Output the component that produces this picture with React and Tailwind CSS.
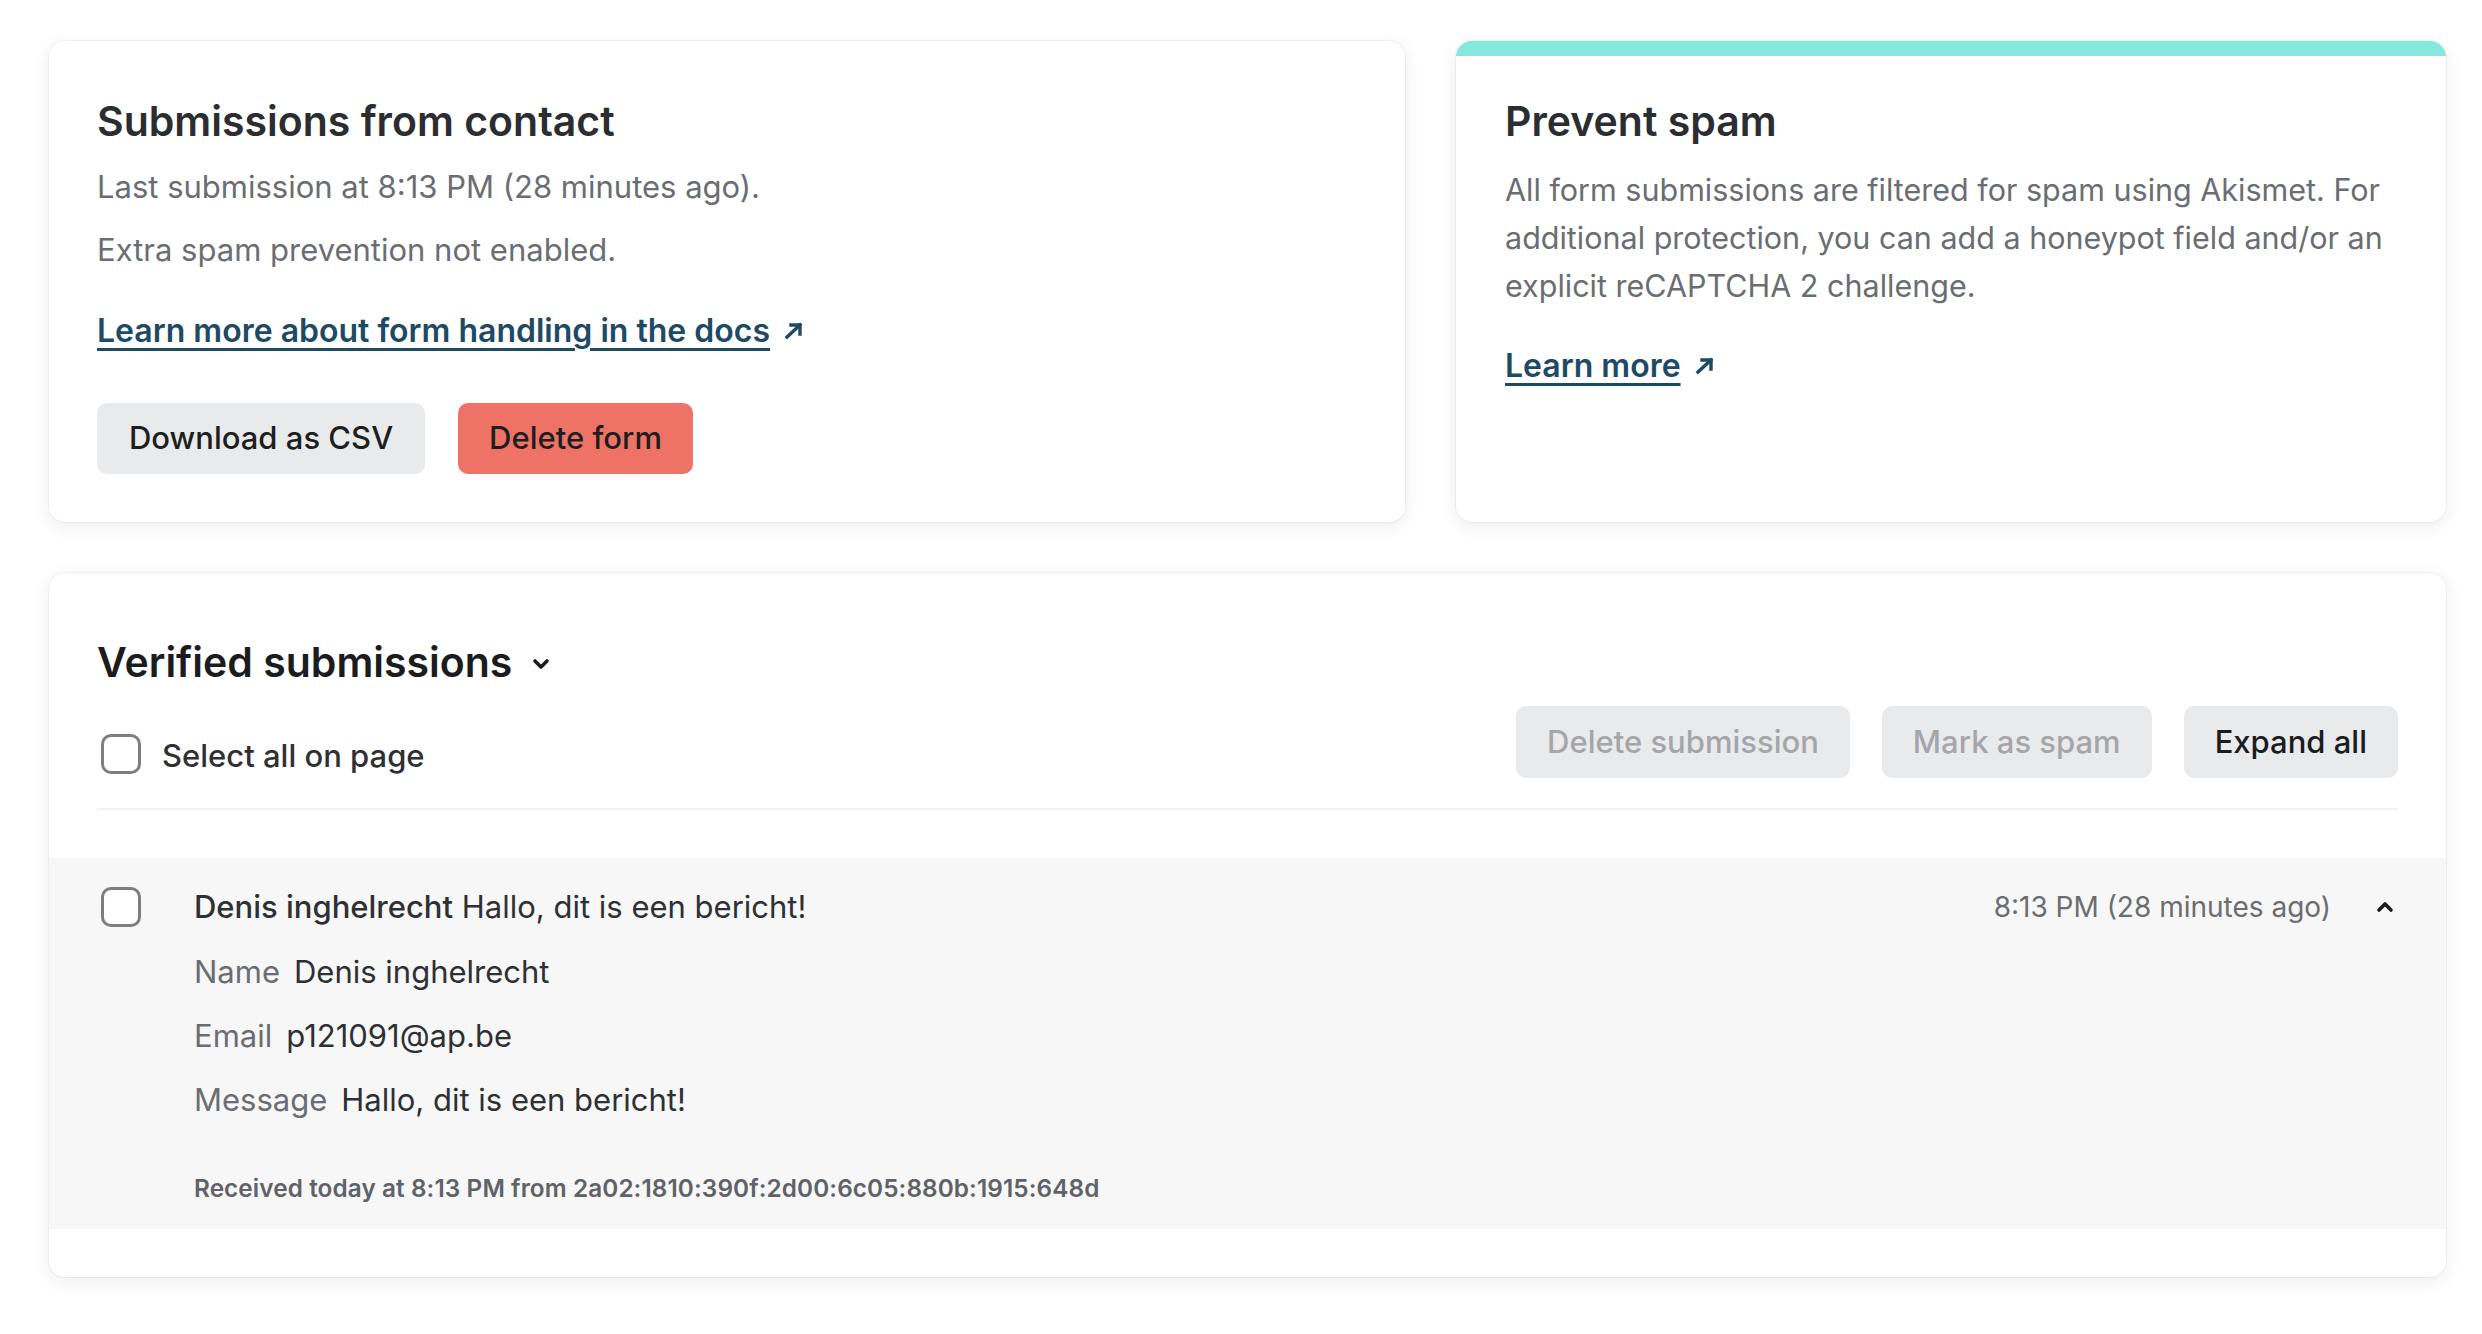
import React from "react";

const font = { fontFamily: "Inter, 'Noto Sans', sans-serif" };

function Arrow() {
  return (
    <svg width="20" height="18" viewBox="0 0 20 18" className="inline-block ml-[14px] align-middle -mt-[4px]" fill="none" stroke="#1d4a64" strokeWidth="3.4" strokeLinecap="square">
      <line x1="3" y1="15" x2="16" y2="3" />
      <polyline points="7,3 16,3 16,12" />
    </svg>
  );
}

function Checkbox() {
  return <div className="w-[40px] h-[40px] shrink-0 rounded-[10px] border-[3px] border-[#7c7e82] bg-white" />;
}

export default function App() {
  return (
    <div className="min-h-[1334px] bg-white pl-[49px] pr-[36px] pt-[41px]" style={font}>
      <div className="grid grid-cols-[1356px_990px] gap-[51px]">
        {/* Card 1 */}
        <div className="rounded-[16px] bg-white shadow-[0_0_0_1px_rgba(0,0,0,0.04),0_4px_18px_rgba(0,0,0,0.08)] pt-[52px] px-[48px] pb-[48px]">
          <h2 className="text-[41px] leading-[56px] font-semibold text-[#2b2d31]">Submissions from contact</h2>
          <p className="mt-[14px] text-[31px] leading-[48px] text-[#6a6d72]">Last submission at 8:13 PM (28 minutes ago).</p>
          <p className="mt-[15px] text-[31px] leading-[48px] text-[#6a6d72]">Extra spam prevention not enabled.</p>
          <div className="mt-[33px] text-[32px] leading-[48px]">
            <a className="font-semibold text-[#1d4a64] underline decoration-[3px] underline-offset-[6px]">Learn more about form handling in the docs</a>
            <Arrow />
          </div>
          <div className="mt-[48px] flex gap-[33px]">
            <button className="h-[71px] px-[32px] rounded-[10px] bg-[#e9eaec] text-[31px] font-medium text-[#1d1e20]">Download as CSV</button>
            <button className="h-[71px] px-[31px] rounded-[10px] bg-[#ee7366] text-[31px] font-medium text-[#1d1e20]">Delete form</button>
          </div>
        </div>

        {/* Card 2 */}
        <div className="rounded-[16px] bg-white overflow-hidden shadow-[0_0_0_1px_rgba(0,0,0,0.04),0_4px_18px_rgba(0,0,0,0.08)]">
          <div className="h-[15px] bg-[#86e8dd]" />
          <div className="pt-[37px] px-[49px] pb-[48px]">
            <h2 className="text-[41px] leading-[56px] font-semibold text-[#2b2d31]">Prevent spam</h2>
            <p className="mt-[17px] text-[30.5px] leading-[48px] text-[#6a6d72]">
              All form submissions are filtered for spam using Akismet. For additional protection, you can add a honeypot field and/or an explicit reCAPTCHA 2 challenge.
            </p>
            <div className="mt-[32px] text-[32px] leading-[48px]">
              <a className="font-semibold text-[#1d4a64] underline decoration-[3px] underline-offset-[6px]">Learn more</a>
              <Arrow />
            </div>
          </div>
        </div>
      </div>

      {/* Card 3 */}
      <div className="mt-[51px] w-[2397px] rounded-[16px] bg-white shadow-[0_0_0_1px_rgba(0,0,0,0.04),0_4px_18px_rgba(0,0,0,0.08)] pt-[61px] pb-[48px]">
        <div className="px-[48px]">
          <div className="flex items-end justify-between pb-[30px] border-b-2 border-[#f2f2f3]">
            <div>
              <div className="flex items-center gap-[20px]">
                <h2 className="text-[41px] leading-[56px] font-semibold text-[#1b1c1e]">Verified submissions</h2>
                <svg width="18" height="12" viewBox="0 0 18 12" fill="none" stroke="#1b1c1e" strokeWidth="3.6" strokeLinecap="round" strokeLinejoin="round" className="mt-[4px]">
                  <polyline points="3,3 9,9 15,3" />
                </svg>
              </div>
              <label className="mt-[40px] flex items-center h-[48px] pl-[4px]">
                <Checkbox />
                <span className="ml-[21px] text-[31px] font-medium text-[#2e3034] mt-[4px]">Select all on page</span>
              </label>
            </div>
            <div className="flex gap-[32px]">
              <button className="h-[72px] px-[31px] rounded-[10px] bg-[#e9eaec] text-[31px] font-medium text-[#a4a6aa]">Delete submission</button>
              <button className="h-[72px] px-[31px] rounded-[10px] bg-[#e9eaec] text-[31px] font-medium text-[#a4a6aa]">Mark as spam</button>
              <button className="h-[72px] px-[31px] rounded-[10px] bg-[#e9eaec] text-[31px] font-medium text-[#1b1c1e]">Expand all</button>
            </div>
          </div>
        </div>

        <div className="mt-[48px] bg-[#f7f7f7] px-[48px] pt-[28px] pb-[25px]">
          <div className="flex items-start">
            <div className="pl-[4px] pt-[1px]"><Checkbox /></div>
            <div className="ml-[53px] flex-1">
              <div className="flex items-center justify-between h-[42px]">
                <div className="text-[31px] text-[#2e3034]">
                  <span className="font-medium">Denis inghelrecht</span> Hallo, dit is een bericht!
                </div>
                <div className="flex items-center">
                  <span className="text-[28px] text-[#6a6d72]">8:13 PM (28 minutes ago)</span>
                  <svg width="18" height="12" viewBox="0 0 18 12" fill="none" stroke="#1b1c1e" strokeWidth="3.6" strokeLinecap="round" strokeLinejoin="round" className="ml-[45px] mr-[4px]">
                    <polyline points="3,9 9,3 15,9" />
                  </svg>
                </div>
              </div>
              <div className="mt-[20px] flex flex-col gap-[16px] text-[31px] leading-[48px]">
                <div><span className="text-[#6a6d72]">Name</span><span className="ml-[14px] text-[#2e3034]">Denis inghelrecht</span></div>
                <div><span className="text-[#6a6d72]">Email</span><span className="ml-[14px] text-[#2e3034]">p121091@ap.be</span></div>
                <div><span className="text-[#6a6d72]">Message</span><span className="ml-[14px] text-[#2e3034]">Hallo, dit is een bericht!</span></div>
              </div>
              <div className="mt-[48px] text-[24.3px] leading-[32px] font-semibold text-[#5f6267] tracking-[0.1px]">
                Received today at 8:13 PM from 2a02:1810:390f:2d00:6c05:880b:1915:648d
              </div>
            </div>
          </div>
        </div>
      </div>
    </div>
  );
}
